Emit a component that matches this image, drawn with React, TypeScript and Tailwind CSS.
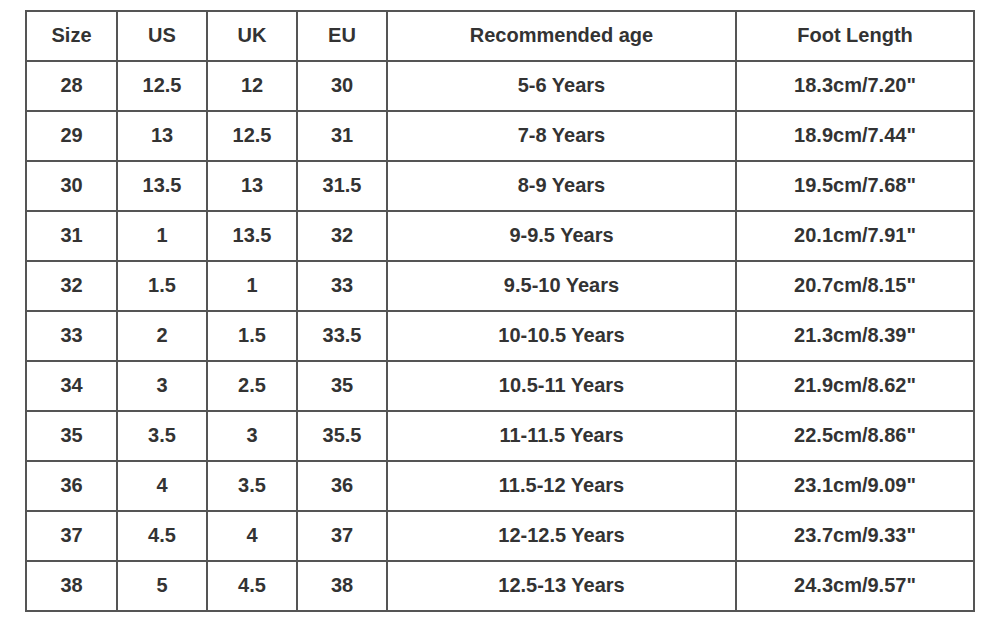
const headers = ["Size", "US", "UK", "EU", "Recommended age", "Foot Length"];

const rows: string[][] = [
  ["28", "12.5", "12", "30", "5-6 Years", "18.3cm/7.20\""],
  ["29", "13", "12.5", "31", "7-8 Years", "18.9cm/7.44\""],
  ["30", "13.5", "13", "31.5", "8-9 Years", "19.5cm/7.68\""],
  ["31", "1", "13.5", "32", "9-9.5 Years", "20.1cm/7.91\""],
  ["32", "1.5", "1", "33", "9.5-10 Years", "20.7cm/8.15\""],
  ["33", "2", "1.5", "33.5", "10-10.5 Years", "21.3cm/8.39\""],
  ["34", "3", "2.5", "35", "10.5-11 Years", "21.9cm/8.62\""],
  ["35", "3.5", "3", "35.5", "11-11.5 Years", "22.5cm/8.86\""],
  ["36", "4", "3.5", "36", "11.5-12 Years", "23.1cm/9.09\""],
  ["37", "4.5", "4", "37", "12-12.5 Years", "23.7cm/9.33\""],
  ["38", "5", "4.5", "38", "12.5-13 Years", "24.3cm/9.57\""],
];

const widths = ["w-[91px]", "w-[90px]", "w-[90px]", "w-[90px]", "w-[349px]", "w-[238px]"];

export default function App() {
  return (
    <div className="w-[1000px] h-[621px] bg-white pt-[10px] pl-[25px] font-['Liberation_Sans',Arial,sans-serif] text-[20px] leading-none font-bold text-[#333]">
      <table className="table-fixed border-collapse w-[950px]">
        <colgroup>
          {widths.map((w, i) => (
            <col key={i} className={w} />
          ))}
        </colgroup>
        <thead>
          <tr className="h-[50px]">
            {headers.map((h) => (
              <th key={h} className="border-2 border-[#555] text-center align-middle font-bold p-0 pb-[2px]">
                {h}
              </th>
            ))}
          </tr>
        </thead>
        <tbody>
          {rows.map((r) => (
            <tr key={r[0]} className="h-[50px]">
              {r.map((c, i) => (
                <td key={i} className="border-2 border-[#555] text-center align-middle p-0 pb-[2px]">
                  {c}
                </td>
              ))}
            </tr>
          ))}
        </tbody>
      </table>
    </div>
  );
}
